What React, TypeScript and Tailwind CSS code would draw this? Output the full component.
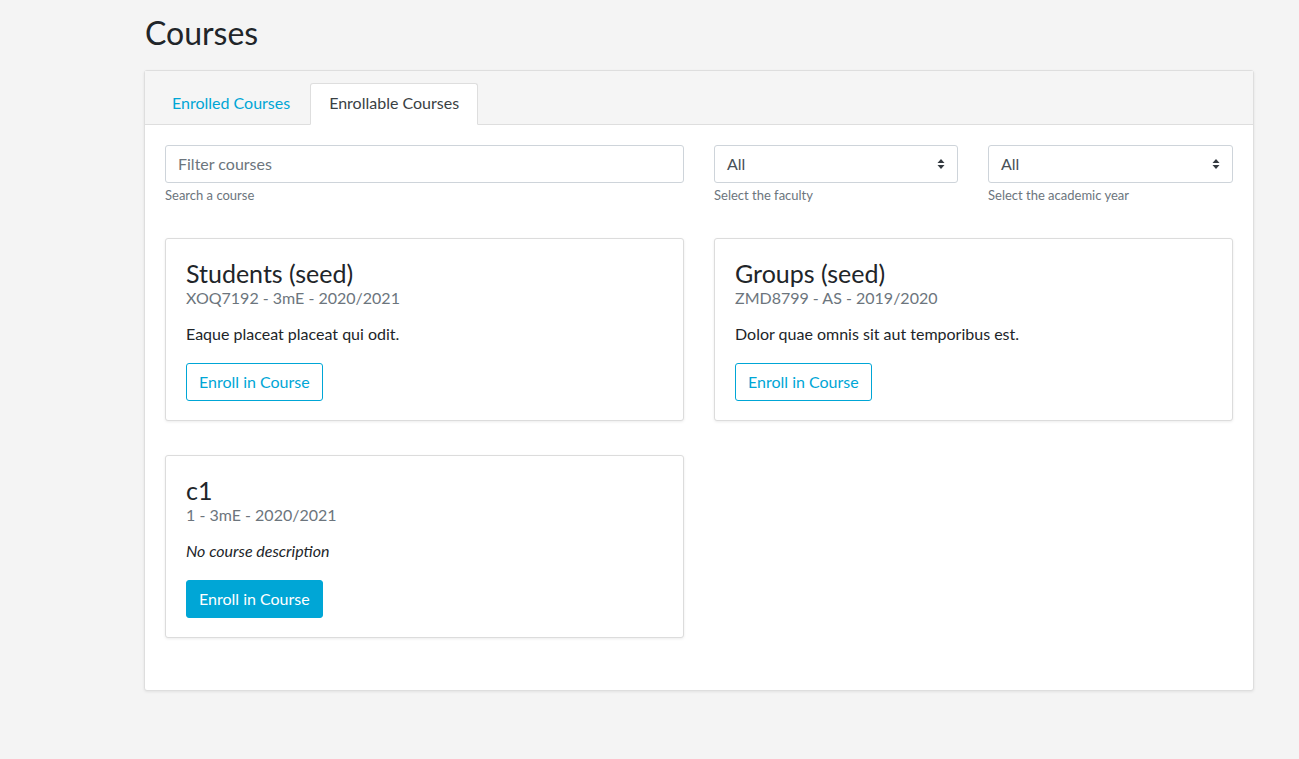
import React from "react";

function Arrows() {
  return (
    <svg width="8" height="12" viewBox="0 0 8 12" className="shrink-0">
      <path d="M4 1 L7.5 5 L0.5 5 Z" fill="#343a40" />
      <path d="M4 11 L7.5 7 L0.5 7 Z" fill="#343a40" />
    </svg>
  );
}

function CourseCard({
  title,
  sub,
  desc,
  italic,
  filled,
}: {
  title: string;
  sub: string;
  desc: string;
  italic?: boolean;
  filled?: boolean;
}) {
  return (
    <div className="bg-white border border-[#dcdcdc] rounded-[3px] shadow-[0_1px_3px_rgba(0,0,0,0.08)] px-5 pt-[19px] pb-[19px]">
      <div className="text-[25px] leading-[30px] text-[#212529]">{title}</div>
      <div className="text-[16px] leading-[24px] text-[#6c757d] mt-[-2px]">{sub}</div>
      <div className={`text-[16px] leading-[24px] text-[#212529] mt-[12px] ${italic ? "italic" : ""}`}>{desc}</div>
      <button
        className={`mt-[17px] h-[38px] px-[12px] rounded-[3px] text-[16px] border ${
          filled
            ? "bg-[#00a6d6] border-[#00a6d6] text-white"
            : "bg-white border-[#00a6d6] text-[#00a6d6]"
        }`}
      >
        Enroll in Course
      </button>
    </div>
  );
}

export default function App() {
  return (
    <div
      className="min-h-[759px] bg-[#f4f4f4] text-[#212529]"
      style={{ fontFamily: "Lato, 'Open Sans', sans-serif" }}
    >
      <div className="ml-[144px] w-[1110px] pt-[14px]">
        <h1 className="text-[32px] leading-[38px] font-normal ml-[1px] mb-[18px]">Courses</h1>
        <div className="bg-white border border-[#dedede] rounded-[3px] shadow-[0_1px_3px_rgba(0,0,0,0.08)]">
          <div className="bg-[#f5f5f5] border-b border-[#dedede] px-[20px] pt-[12px] flex items-end h-[54px]">
            <div className="h-[41px] px-[7px] pb-[3px] flex items-center text-[16px] text-[#00a6d6] mb-[-1px]">
              Enrolled Courses
            </div>
            <div className="h-[42px] ml-[13px] px-[18px] pb-[2px] flex items-center text-[16px] text-[#3a3f44] bg-white border border-[#dedede] border-b-white rounded-t-[3px] mb-[-1px]">
              Enrollable Courses
            </div>
          </div>
          <div className="px-[20px] pt-[20px] pb-[52px]">
            <div className="grid grid-cols-[519px_244px_245px] gap-x-[30px]">
              <div>
                <div className="h-[38px] border border-[#ced4da] rounded-[3px] px-[12px] pb-[1px] flex items-center text-[16px] text-[#6c757d]">
                  Filter courses
                </div>
                <div className="text-[13px] text-[#6c757d] mt-[3px]">Search a course</div>
              </div>
              <div>
                <div className="h-[38px] border border-[#ced4da] rounded-[3px] pl-[12px] pr-[12px] flex items-center justify-between text-[16px] text-[#495057]">
                  <span className="pb-[1px]">All</span>
                  <Arrows />
                </div>
                <div className="text-[13px] text-[#6c757d] mt-[3px]">Select the faculty</div>
              </div>
              <div>
                <div className="h-[38px] border border-[#ced4da] rounded-[3px] pl-[12px] pr-[12px] flex items-center justify-between text-[16px] text-[#495057]">
                  <span className="pb-[1px]">All</span>
                  <Arrows />
                </div>
                <div className="text-[13px] text-[#6c757d] mt-[3px]">Select the academic year</div>
              </div>
            </div>
            <div className="grid grid-cols-2 gap-x-[30px] gap-y-[34px] mt-[32px]">
              <CourseCard
                title="Students (seed)"
                sub="XOQ7192 - 3mE - 2020/2021"
                desc="Eaque placeat placeat qui odit."
              />
              <CourseCard
                title="Groups (seed)"
                sub="ZMD8799 - AS - 2019/2020"
                desc="Dolor quae omnis sit aut temporibus est."
              />
              <CourseCard title="c1" sub="1 - 3mE - 2020/2021" desc="No course description" italic filled />
            </div>
          </div>
        </div>
      </div>
    </div>
  );
}
